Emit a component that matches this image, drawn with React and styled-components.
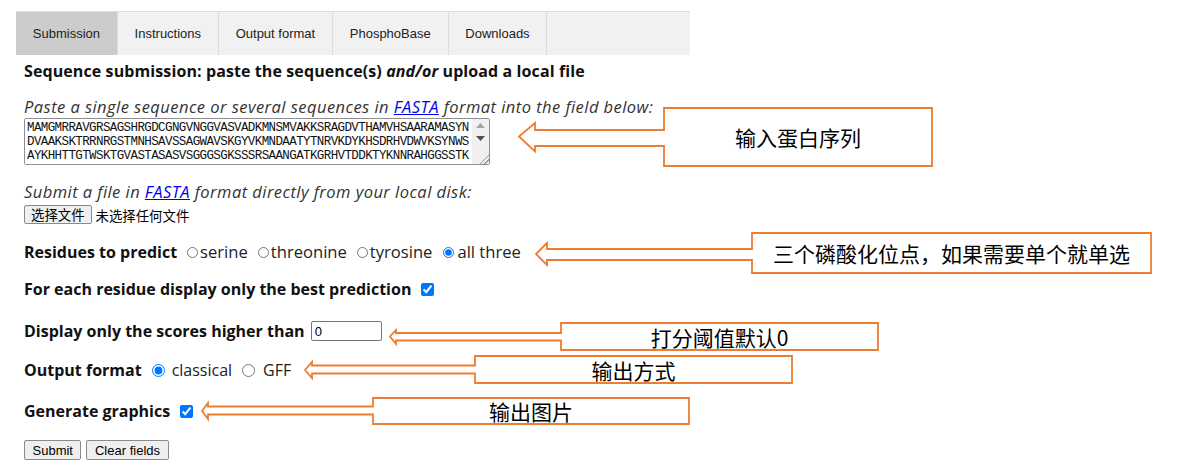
import React from 'react';
import styled, { createGlobalStyle } from 'styled-components';

const Global = createGlobalStyle`
  html, body { margin: 0; padding: 0; background: #fff; }
  body { font-family: "Open Sans", "Noto Sans CJK SC", sans-serif; color: #000; }
`;

const Page = styled.div`
  position: relative;
  width: 1192px;
  height: 475px;
  overflow: hidden;
  padding: 11px 0 0 16px;
  box-sizing: border-box;
`;

const TabBar = styled.nav`
  display: flex;
  width: 674px;
  height: 44px;
  background: #f1f1f1;
  border-top: 1px solid #dcdcdc;
  box-sizing: border-box;
`;

const Tab = styled.div`
  display: flex;
  align-items: center;
  padding: 0 16.8px;
  font: 13px "Liberation Sans", Arial, sans-serif;
  color: #222;
  background: ${(p) => (p.$active ? '#cccccc' : 'transparent')};
  border-right: 1px solid #dcdcdc;
`;

const Form = styled.form`
  padding-left: 8px;
`;

const Heading = styled.h3`
  margin: 5px 0 0;
  font-size: 16px;
  font-weight: 700;
  letter-spacing: 0.1px;
  line-height: 22px;
  color: #111;
`;

const Hint = styled.p`
  margin: ${(p) => p.$mt}px 0 0;
  font-style: italic;
  font-size: 16.5px;
  letter-spacing: 0.45px;
  line-height: 22px;
  color: #333;
`;

const Link = styled.a`
  color: #0000ee;
  text-decoration: underline;
`;

const SeqBox = styled.div`
  display: flex;
  width: 466px;
  height: 47px;
  box-sizing: border-box;
  border: 1px solid #8f8f8f;
  border-radius: 2px;
  overflow: hidden;
`;

const SeqArea = styled.textarea`
  flex: 1;
  min-width: 0;
  font: 12.5px/14px "Liberation Mono", monospace;
  letter-spacing: -0.6px;
  color: #111;
  padding: 2px 2px 1px;
  margin: 0;
  border: none;
  outline: none;
  overflow: hidden;
  resize: none;
`;

const ScrollRail = styled.div`
  display: flex;
  flex-direction: column;
  width: 17px;
  background: #f0f0f0;
`;

const ScrollArrow = styled.div`
  display: flex;
  align-items: center;
  justify-content: center;
  height: 13px;
`;

const Grip = styled.div`
  margin-top: auto;
  align-self: flex-end;
  width: 11px;
  height: 11px;
  background: linear-gradient(
    135deg,
    transparent 55%,
    #9a9a9a 55%,
    #9a9a9a 62%,
    transparent 62%,
    transparent 76%,
    #9a9a9a 76%,
    #9a9a9a 83%,
    transparent 83%
  );
`;

const FileRow = styled.div`
  display: flex;
  align-items: center;
  gap: 4px;
  margin-top: 2px;
  height: 19px;
  font: 13.4px "Noto Sans CJK SC", sans-serif;
`;

const NativeButton = styled.button`
  height: ${(p) => p.$h || 19}px;
  padding: 0 ${(p) => (p.$cjk ? 6 : 7.5)}px;
  font: ${(p) => (p.$cjk ? '13.4px "Noto Sans CJK SC"' : '13px "Liberation Sans", Arial')}, sans-serif;
  color: #000;
  background: #efefef;
  border: 1px solid #8a8a8a;
  border-radius: 2px;
  line-height: 1;
`;

const Row = styled.div`
  display: flex;
  align-items: center;
  margin-top: ${(p) => p.$mt}px;
  height: 22px;
  font-size: 16px;
  line-height: 22px;
`;

const Label = styled.span`
  font-weight: 700;
  color: #111;
`;

const Option = styled.label`
  display: flex;
  align-items: center;
  color: #222;
  font-size: ${(p) => p.$fs || 16}px;
  margin-left: ${(p) => p.$ml}px;
`;

const Radio = styled.input.attrs({ type: 'radio' })`
  width: ${(p) => p.$size}px;
  height: ${(p) => p.$size}px;
  margin: 0 ${(p) => p.$gap}px 0 0;
  accent-color: #0075ff;
`;

const Check = styled.input.attrs({ type: 'checkbox' })`
  width: 13px;
  height: 13px;
  margin: 0 0 0 ${(p) => p.$ml}px;
  accent-color: #0075ff;
`;

const ScoreInput = styled.input`
  width: 71px;
  height: 20px;
  box-sizing: border-box;
  margin-left: 6px;
  padding: 0 3px;
  font: 13px "Liberation Sans", Arial, sans-serif;
  border: 1px solid #767676;
  border-radius: 2px;
`;

const ButtonRow = styled.div`
  display: flex;
  gap: 5px;
  margin-top: 18px;
`;

const CalloutWrap = styled.div`
  position: absolute;
  pointer-events: none;
`;

const CalloutLabel = styled.div`
  position: absolute;
  display: flex;
  align-items: center;
  justify-content: center;
  font: 21px "Noto Sans CJK SC", sans-serif;
  color: #000;
`;

function Callout({ g, children }) {
  const { tipX, tipY, headX, headTop, headBot, shaftTop, shaftBot, boxL, boxR, boxT, boxB } = g;
  const x0 = tipX - 3;
  const y0 = Math.min(headTop, boxT) - 3;
  const w = boxR - x0 + 3;
  const h = Math.max(headBot, boxB) - y0 + 3;
  const p = (x, y) => `${x - x0},${y - y0}`;
  const d = `M${p(boxL, boxT)} L${p(boxR, boxT)} L${p(boxR, boxB)} L${p(boxL, boxB)} L${p(boxL, shaftBot)} L${p(headX, shaftBot)} L${p(headX, headBot)} L${p(tipX, tipY)} L${p(headX, headTop)} L${p(headX, shaftTop)} L${p(boxL, shaftTop)} Z`;
  return (
    <CalloutWrap style={{ left: x0, top: y0, width: w, height: h }}>
      <svg width={w} height={h} style={{ display: 'block' }}>
        <path d={d} fill="#fff" stroke="#ED7D31" strokeWidth="1.8" strokeLinejoin="miter" />
      </svg>
      <CalloutLabel style={{ left: boxL - x0, top: boxT - y0, width: boxR - boxL, height: boxB - boxT }}>
        {children}
      </CalloutLabel>
    </CalloutWrap>
  );
}

const callouts = [
  { text: '输入蛋白序列', g: { tipX: 519, tipY: 136.5, headX: 535, headTop: 123, headBot: 151.5, shaftTop: 130, shaftBot: 146, boxL: 664, boxR: 932, boxT: 108, boxB: 166 } },
  { text: '三个磷酸化位点，如果需要单个就单选', g: { tipX: 536, tipY: 254, headX: 547, headTop: 243, headBot: 265, shaftTop: 249, shaftBot: 260, boxL: 752, boxR: 1151, boxT: 233, boxB: 273 } },
  { text: '打分阈值默认0', g: { tipX: 390, tipY: 336.5, headX: 396, headTop: 330, headBot: 344, shaftTop: 333, shaftBot: 340.5, boxL: 561, boxR: 878, boxT: 323, boxB: 350 } },
  { text: '输出方式', g: { tipX: 305, tipY: 370, headX: 312, headTop: 362, headBot: 378, shaftTop: 365.5, shaftBot: 373.5, boxL: 475, boxR: 792, boxT: 356, boxB: 383 } },
  { text: '输出图片', g: { tipX: 202, tipY: 411, headX: 208, headTop: 403, headBot: 419, shaftTop: 406.5, shaftBot: 414.5, boxL: 373, boxR: 689, boxT: 398, boxB: 424 } },
];

const SEQ = [
  'MAMGMRRAVGRSAGSHRGDCGNGVNGGVASVADKMNSMVAKKSRAGDVTHAMVHSAARAMASYN',
  'DVAAKSKTRRNRGSTMNHSAVSSAGWAVSKGYVKMNDAATYTNRVKDYKHSDRHVDWVKSYNWS',
  'AYKHHTTGTWSKTGVASTASASVSGGGSGKSSSRSAANGATKGRHVTDDKTYKNNRAHGGSSTK',
  'RSAGSHRGDCGNGVNGGVASVADKMNSMVAKKSRAGDVTHAMVHSAARAMASYNDVAAKSKTRR',
].join('\n');

const Tri = ({ up, color }) => (
  <svg width="9" height="5" viewBox="0 0 9 5">
    <path d={up ? 'M0 5 L4.5 0 L9 5 Z' : 'M0 0 L4.5 5 L9 0 Z'} fill={color} />
  </svg>
);

export default function App() {
  return (
    <Page>
      <Global />
      <TabBar>
        <Tab $active>Submission</Tab>
        <Tab>Instructions</Tab>
        <Tab>Output format</Tab>
        <Tab>PhosphoBase</Tab>
        <Tab>Downloads</Tab>
      </TabBar>
      <Form onSubmit={(e) => e.preventDefault()}>
        <Heading>
          Sequence submission: paste the sequence(s) <i>and/or</i> upload a local file
        </Heading>
        <Hint $mt={14}>
          Paste a single sequence or several sequences in <Link href="#">FASTA</Link> format into the field below:
        </Hint>
        <SeqBox>
          <SeqArea wrap="off" defaultValue={SEQ} spellCheck={false} />
          <ScrollRail>
            <ScrollArrow><Tri up color="#a3a3a3" /></ScrollArrow>
            <ScrollArrow><Tri color="#505050" /></ScrollArrow>
            <Grip />
          </ScrollRail>
        </SeqBox>
        <Hint $mt={16}>
          Submit a file in <Link href="#">FASTA</Link> format directly from your local disk:
        </Hint>
        <FileRow>
          <NativeButton type="button" $cjk>选择文件</NativeButton>
          <span>未选择任何文件</span>
        </FileRow>
        <Row $mt={17}>
          <Label>Residues to predict</Label>
          <Option $ml={10} $fs={16.6}><Radio name="res" $size={11} $gap={2} />serine</Option>
          <Option $ml={10} $fs={16.6}><Radio name="res" $size={11} $gap={2} />threonine</Option>
          <Option $ml={10} $fs={16.6}><Radio name="res" $size={11} $gap={2} />tyrosine</Option>
          <Option $ml={11} $fs={16.6}><Radio name="res" $size={11} $gap={3} defaultChecked />all three</Option>
        </Row>
        <Row $mt={15}>
          <Label>For each residue display only the best prediction</Label>
          <Check $ml={10} defaultChecked />
        </Row>
        <Row $mt={20}>
          <Label>Display only the scores higher than</Label>
          <ScoreInput type="text" defaultValue="0" />
        </Row>
        <Row $mt={17}>
          <Label>Output format</Label>
          <Option $ml={10}><Radio name="fmt" $size={13} $gap={7} defaultChecked />classical</Option>
          <Option $ml={10}><Radio name="fmt" $size={13} $gap={8} />GFF</Option>
        </Row>
        <Row $mt={19}>
          <Label>Generate graphics</Label>
          <Check $ml={10} defaultChecked />
        </Row>
        <ButtonRow>
          <NativeButton type="submit" $h={20}>Submit</NativeButton>
          <NativeButton type="reset" $h={20}>Clear fields</NativeButton>
        </ButtonRow>
      </Form>
      {callouts.map((c) => (
        <Callout key={c.text} g={c.g}>{c.text}</Callout>
      ))}
    </Page>
  );
}
